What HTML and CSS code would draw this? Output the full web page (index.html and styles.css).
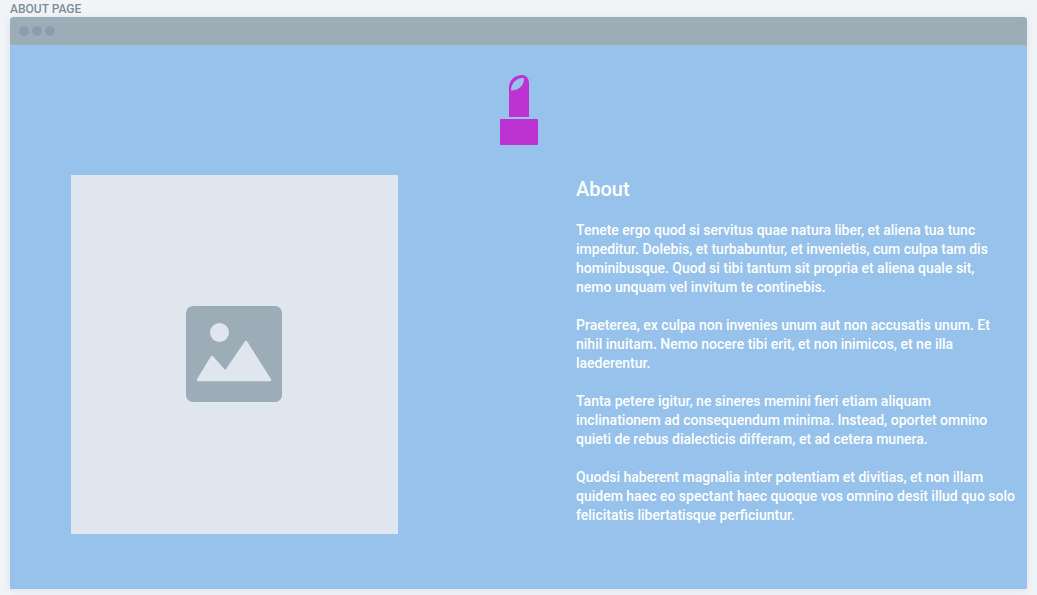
FILE: index.html
```html
<!DOCTYPE html>
<html lang="en">
<head>
<meta charset="utf-8">
<meta name="viewport" content="width=device-width, initial-scale=1">
<title>About Page</title>
<link rel="stylesheet" href="styles.css">
</head>
<body>
<h1 class="page-label">ABOUT PAGE</h1>
<div class="window">
  <div class="titlebar">
    <span class="dot"></span><span class="dot"></span><span class="dot"></span>
  </div>
  <main class="content">
    <svg class="logo" viewBox="0 0 40 72" aria-hidden="true">
      <path fill="#bd33d1" fill-rule="evenodd" d="M10 43V14C10 6 16 1 23 1c4 0 7 3 7 8v34zM12 16.500C20 16.500 25.500 11 25 4C18 3 12 9 12 16.500z"/>
      <rect x="1" y="45" width="38" height="26" rx="1" fill="#bd33d1"/>
    </svg>
    <div class="columns">
      <div class="photo">
        <svg class="photo-icon" viewBox="0 0 96 96" aria-hidden="true">
          <rect width="96" height="96" rx="7" fill="#9dadb8"/>
          <circle cx="33.500" cy="26.500" r="9.500" fill="#dfe6ee"/>
          <path d="M12 74L26 51L39.500 66L60 36L84 74z" fill="#dfe6ee" stroke="#dfe6ee" stroke-width="2.500" stroke-linejoin="round"/>
        </svg>
      </div>
      <article class="about">
        <h2 class="title">About</h2>
        <p class="text">Tenete ergo quod si servitus quae natura liber, et aliena tua tunc<br>impeditur. Dolebis, et turbabuntur, et invenietis, cum culpa tam dis<br>hominibusque. Quod si tibi tantum sit propria et aliena quale sit,<br>nemo unquam vel invitum te continebis.</p>
        <p class="text">Praeterea, ex culpa non invenies unum aut non accusatis unum. Et<br>nihil inuitam. Nemo nocere tibi erit, et non inimicos, et ne illa<br>laederentur.</p>
        <p class="text">Tanta petere igitur, ne sineres memini fieri etiam aliquam<br>inclinationem ad consequendum minima. Instead, oportet omnino<br>quieti de rebus dialecticis differam, et ad cetera munera.</p>
        <p class="text">Quodsi haberent magnalia inter potentiam et divitias, et non illam<br>quidem haec eo spectant haec quoque vos omnino desit illud quo solo<br>felicitatis libertatisque perficiuntur.</p>
      </article>
    </div>
  </main>
</div>
</body>
</html>
```
FILE: styles.css
```css
* { box-sizing: border-box; }
body {
  margin: 0;
  padding: 1px 10px 6px;
  background: #f0f4f7;
  font-family: Roboto, "Liberation Sans", sans-serif;
}
.page-label {
  margin: 0;
  font-size: 12px;
  line-height: 16px;
  font-weight: 500;
  color: #7d8d9c;
}
.window {
  border-radius: 4px 4px 0 0;
  background: #96c2eb;
  box-shadow: 0 1px 6px rgba(80, 100, 120, 0.12);
}
.titlebar {
  display: flex;
  align-items: center;
  gap: 3px;
  height: 28px;
  padding: 0 9px;
  border-radius: 4px 4px 0 0;
  background: #9dadb8;
  box-shadow: 0 1px 0 #a5c2dc;
}
.dot {
  width: 10px;
  height: 10px;
  border-radius: 50%;
  background: #8e9dac;
}
.content {
  padding: 29px 0 55px;
}
.logo {
  display: block;
  width: 40px;
  height: 72px;
  margin: 0 auto 29px;
}
.columns {
  display: grid;
  grid-template-columns: minmax(0, 327fr) minmax(0, 432fr);
  column-gap: 178px;
  padding: 0 19px 0 61px;
}
.photo {
  display: flex;
  align-items: center;
  justify-content: center;
  min-height: 359px;
  padding: 0 1px 1px 0;
  background: #dfe6ee;
}
.photo-icon {
  width: 96px;
  height: 96px;
}
.about {
  color: #fff;
}
.title {
  margin: 0 0 17px;
  font-size: 20px;
  line-height: 29px;
  font-weight: 500;
}
.text {
  margin: 0 0 19px;
  font-size: 14px;
  line-height: 19px;
  font-weight: 500;
  white-space: nowrap;
}
.text:last-child { margin-bottom: 0; }
```
